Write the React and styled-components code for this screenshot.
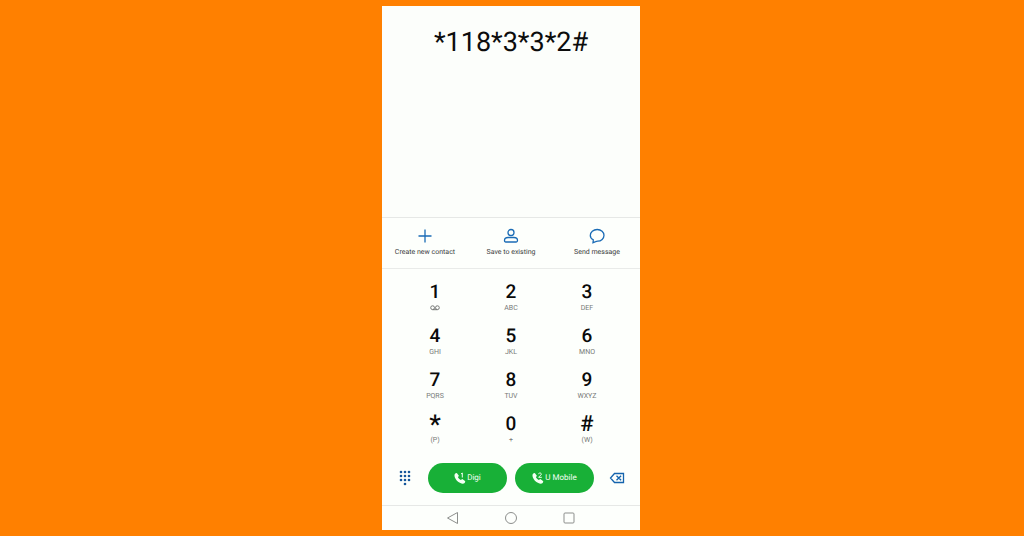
import React from "react";
import styled, { createGlobalStyle } from "styled-components";

const GlobalStyle = createGlobalStyle`
  *, *::before, *::after { box-sizing: border-box; }
  body {
    margin: 0;
    background: #ff8000;
    font-family: Roboto, "Liberation Sans", sans-serif;
    text-rendering: geometricPrecision;
  }
  button, input { font-family: inherit; text-rendering: inherit; }
`;

const Page = styled.main`
  min-height: 100vh;
  padding: 6px 2px 6px 0;
  display: flex;
  justify-content: center;
  background: #ff8000;
`;

const Phone = styled.section`
  width: 100%;
  max-width: 258px;
  display: flex;
  flex-direction: column;
  background: #fdfffc;
`;

const Display = styled.div`
  flex: 1;
  padding: 18px 8px;
  background: #fcfefb;
`;

const NumberInput = styled.input`
  width: 100%;
  height: 36px;
  padding: 0;
  border: 0;
  outline: 0;
  background: transparent;
  color: #0c0c0c;
  font-size: 27px;
  line-height: 36px;
  text-align: center;
`;

const PlainButton = styled.button`
  padding: 0;
  border: 0;
  background: none;
  cursor: pointer;
`;

const Actions = styled.div`
  height: 52px;
  display: grid;
  grid-template-columns: repeat(3, 1fr);
  border-top: 1px solid #e6e8e6;
  border-bottom: 1px solid #e9ebe9;
`;

const ActionButton = styled(PlainButton)`
  display: flex;
  flex-direction: column;
  align-items: center;
  padding-top: 10px;
  gap: 3px;
  color: #3a3c3d;
  font-size: 7px;
  line-height: 10px;
  white-space: nowrap;
`;

const ActionIcon = styled.svg`
  width: 16px;
  height: 16px;
  fill: none;
  stroke: #1a6bb5;
  stroke-width: 1.3;
`;

const Keypad = styled.div`
  padding: 12px 15px 6px;
  display: grid;
  grid-template-columns: repeat(3, 1fr);
  grid-auto-rows: 44px;
`;

const Key = styled(PlainButton)`
  display: flex;
  flex-direction: column;
  align-items: center;
  justify-content: flex-start;
`;

const digitSizes = {
  "*": { font: 26, line: 24 },
  "#": { font: 22, line: 24 },
};

const Digit = styled.span`
  height: 22px;
  color: #0a0a0a;
  font-size: ${(p) => digitSizes[p.$symbol]?.font ?? 19}px;
  font-weight: 500;
  line-height: ${(p) => digitSizes[p.$symbol]?.line ?? 22}px;
`;

const Letters = styled.span`
  height: 10px;
  display: flex;
  align-items: center;
  color: #777977;
  font-size: 7px;
  line-height: 10px;
`;

const Voicemail = styled.svg`
  width: 10px;
  height: 6px;
  fill: none;
  stroke: #777977;
`;

const CallBar = styled.div`
  height: 42px;
  display: grid;
  grid-template-columns: 46px 1fr 46px;
  align-items: start;
`;

const CallButtons = styled.div`
  display: grid;
  grid-template-columns: 1fr 1fr;
  gap: 8px;
`;

const CallButton = styled(PlainButton)`
  height: 30px;
  display: flex;
  align-items: center;
  justify-content: center;
  gap: 1px;
  border-radius: 15px;
  background: #18b037;
  color: #f4fff4;
  font-size: 8px;
  line-height: 10px;
`;

const CallIcon = styled.svg`
  width: 12px;
  height: 12px;
  fill: #f4fff4;
`;

const SideButton = styled(PlainButton)`
  height: 30px;
  display: flex;
  align-items: center;
  justify-content: center;
`;

const SideIcon = styled.svg`
  width: 16px;
  height: 16px;
  fill: none;
  stroke: #1463ad;
`;

const NavBar = styled.nav`
  height: 25px;
  display: flex;
  align-items: center;
  justify-content: center;
  gap: 44px;
  border-top: 1px solid #e6e8e6;
`;

const NavButton = styled(PlainButton)`
  display: flex;
`;

const NavIcon = styled.svg`
  width: 14px;
  height: 14px;
  fill: none;
  stroke: #8d8f8d;
`;

const keys = [
  ["1", null],
  ["2", "ABC"],
  ["3", "DEF"],
  ["4", "GHI"],
  ["5", "JKL"],
  ["6", "MNO"],
  ["7", "PQRS"],
  ["8", "TUV"],
  ["9", "WXYZ"],
  ["*", "(P)"],
  ["0", "+"],
  ["#", "(W)"],
];

const actions = [
  ["Create new contact", <path d="M8 1.500v13M1.500 8h13" />],
  [
    "Save to existing",
    <>
      <circle cx="8" cy="4.500" r="3" />
      <path d="M1.500 12.500c0-2.200 1.600-3 3.500-3h6c1.900 0 3.500.8 3.500 3 0 1-.5 1.500-1.300 1.500H2.800c-.8 0-1.300-.5-1.300-1.500z" />
    </>,
  ],
  [
    "Send message",
    <path d="M8.200 1.500c4 0 6.800 2.600 6.800 5.800s-2.800 5.900-6.300 5.900c-.9 0-1.500.1-2.100.4L4 14.800l.3-3C2.300 10.700 1.300 9.200 1.300 7.400c0-3.300 3-5.900 6.900-5.900z" />,
  ],
];

const dots = [2, 6, 10].flatMap((y) => [4, 8, 12].map((x) => [x, y]));

function Call({ sim, name }) {
  return (
    <CallButton type="button">
      <CallIcon viewBox="0 0 12 12" aria-hidden="true">
        <path d="M1.200 1.600 2.800.900 4.900 3.700 3.900 5.300C4.500 6.500 5.400 7.400 6.700 8L8.400 7.100 11.300 9.300 10.700 10.900C9.600 11.900 8 11.800 6.300 11.100 3.700 9.900 1.700 7.900.8 5.300.300 3.700.400 2.400 1.200 1.600z" />
        {sim === 1 ? (
          <path d="M7 2 8.300 1v4.500" fill="none" stroke="#f4fff4" />
        ) : (
          <path d="M6.500 2.200C6.700.500 9.500.600 9.300 2.300 9.200 3.300 7.500 4 6.600 5.300H9.800" fill="none" stroke="#f4fff4" />
        )}
      </CallIcon>
      {name}
    </CallButton>
  );
}

export default function App() {
  return (
    <>
      <GlobalStyle />
      <Page>
        <Phone>
          <Display>
            <NumberInput type="text" aria-label="Phone number" defaultValue="*118*3*3*2#" />
          </Display>
          <Actions>
            {actions.map(([label, icon]) => (
              <ActionButton type="button" key={label}>
                <ActionIcon viewBox="0 0 16 16" aria-hidden="true">{icon}</ActionIcon>
                {label}
              </ActionButton>
            ))}
          </Actions>
          <Keypad>
            {keys.map(([digit, letters]) => (
              <Key type="button" key={digit}>
                <Digit $symbol={digit}>{digit}</Digit>
                <Letters>
                  {letters ?? (
                    <Voicemail viewBox="0 0 10 6" aria-hidden="true">
                      <circle cx="2.600" cy="2.700" r="1.900" />
                      <circle cx="7.400" cy="2.700" r="1.900" />
                      <path d="M2.600 4.700h4.800" />
                    </Voicemail>
                  )}
                </Letters>
              </Key>
            ))}
          </Keypad>
          <CallBar>
            <SideButton type="button" aria-label="Hide keypad">
              <SideIcon viewBox="0 0 16 16">
                {[...dots, [8, 14]].map(([x, y]) => (
                  <circle key={`${x}-${y}`} cx={x} cy={y} r="1.300" fill="#14569b" stroke="none" />
                ))}
              </SideIcon>
            </SideButton>
            <CallButtons>
              <Call sim={1} name="Digi" />
              <Call sim={2} name="U Mobile" />
            </CallButtons>
            <SideButton type="button" aria-label="Delete">
              <SideIcon viewBox="0 0 16 16">
                <path d="M5.500 3.500H14.500V12.500H5.500L1.500 8zM7.500 5.700l4.600 4.600M12.100 5.700 7.500 10.300" strokeWidth="1.300" />
              </SideIcon>
            </SideButton>
          </CallBar>
          <NavBar aria-label="System">
            <NavButton type="button" aria-label="Back">
              <NavIcon viewBox="0 0 14 14"><path d="M11.500 1.500v11L1.500 7z" /></NavIcon>
            </NavButton>
            <NavButton type="button" aria-label="Home">
              <NavIcon viewBox="0 0 14 14"><circle cx="7" cy="7" r="5.500" /></NavIcon>
            </NavButton>
            <NavButton type="button" aria-label="Recent apps">
              <NavIcon viewBox="0 0 14 14"><rect x="2" y="2" width="10" height="10" rx="1" /></NavIcon>
            </NavButton>
          </NavBar>
        </Phone>
      </Page>
    </>
  );
}
